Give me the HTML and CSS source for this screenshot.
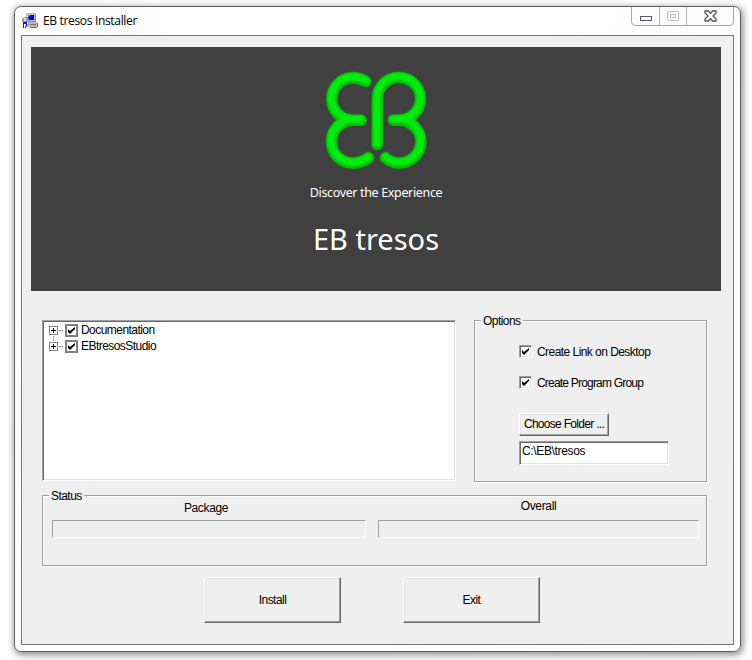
FILE: index.html
```html
<!DOCTYPE html>
<html lang="en">
<head>
<meta charset="utf-8">
<title>EB tresos Installer</title>
<link rel="stylesheet" href="styles.css">
</head>
<body>
<main class="window">
  <header class="titlebar">
    <svg class="app-icon" width="16" height="16" viewBox="0 0 16 16">
      <path fill="#bdbdbd" d="M4 0h10v9H4z"/><path fill="#8c8c8c" d="M13 1h1v8H5V8h8z"/>
      <path fill="#0808e8" d="M6 2h6v5H6z"/><path fill="#6d8cff" d="M6 2h2v1H7v1H6z"/>
      <path fill="#b8b8b8" d="M6 9h9l1 2v3H6z"/><path fill="#777" d="M8 11h6v1H8zM8 14h7v1H8zM15 10h1v4h-1z"/>
      <path fill="#999" d="M1 5l2-1h2l2 2v3H0V6z"/><path fill="#ddd" d="M2 5h2v3H2z"/>
      <path fill="#1515f0" d="M1 9h4v3l-1 3H1z"/><path fill="#fff" d="M2 11h2l-1 4H2z"/><path fill="#aaa" d="M5 11h2v3H5z"/>
    </svg>
    <h1 class="title">EB tresos Installer</h1>
    <div class="caption">
      <span class="cap min"><svg width="12" height="5"><rect x=".5" y=".5" width="11" height="4" rx=".5" fill="#fff" stroke="#535672" stroke-width="1.200"/></svg></span>
      <span class="cap max"><svg width="12" height="10"><rect x=".5" y=".5" width="11" height="9" rx="1" fill="#fff" stroke="#c0c0c0"/><rect x="3.500" y="3.500" width="5" height="3" fill="#fff" stroke="#c0c0c0"/></svg></span>
      <span class="cap close"><svg width="13" height="12" viewBox="0 0 13 12"><path d="M1 1h3.500l2 2.500L8.500 1H12v2L9 6l3 3v2H8.500l-2-2.500-2 2.500H1V9l3-3-3-3z" fill="#fff" stroke="#535666" stroke-width="1.300"/></svg></span>
    </div>
  </header>
  <section class="client">
    <div class="banner">
      <svg class="logo" width="104" height="100" viewBox="104 47 312 300" fill="none" stroke-linecap="round">
        <defs>
          <filter id="soft" x="-10%" y="-10%" width="120%" height="120%"><feGaussianBlur stdDeviation="3.500"/></filter>
          <g id="mark">
            <path d="M227 79C211 70 201 68 188 68a63.500 63.500 0 0 0 0 127h25M188 195a64.500 64.500 0 0 0 0 129c16 0 30-4 47-16"/>
            <path d="M261 268V132a65 64 0 1 1 65 63H309M326 195a66 64.500 0 0 1 0 129c-15 0-26-4-40-16"/>
          </g>
        </defs>
        <use href="#mark" stroke="#00b808" stroke-width="34"/>
        <use href="#mark" stroke="#00ee08" stroke-width="23" filter="url(#soft)" transform="translate(-1 -4)"/>
      </svg>
      <p class="tagline">Discover the Experience</p>
      <p class="product">EB tresos</p>
    </div>
    <div class="panels">
      <ul class="tree">
        <li><i class="expand"></i><i class="stub"></i><span class="tick"><svg width="7" height="7"><path d="M0 2v3l2 2 5-5V0L2 4z"/></svg></span><span class="label">Documentation</span></li>
        <li><i class="expand linked"></i><i class="stub"></i><span class="tick"><svg width="7" height="7"><path d="M0 2v3l2 2 5-5V0L2 4z"/></svg></span><span class="label">EBtresosStudio</span></li>
      </ul>
      <div class="group options">
        <span class="legend">Options</span>
        <label class="check"><span class="box"><svg width="7" height="7"><path d="M0 2v3l2 2 5-5V0L2 4z"/></svg></span>Create Link on Desktop</label>
        <label class="check tight"><span class="box"><svg width="7" height="7"><path d="M0 2v3l2 2 5-5V0L2 4z"/></svg></span>Create Program Group</label>
        <button class="btn choose">Choose Folder ...</button>
        <div class="field">C:\EB\tresos</div>
      </div>
    </div>
    <div class="group status">
      <span class="legend">Status</span>
      <div class="meter package"><span class="name">Package</span><div class="track"></div></div>
      <div class="meter overall"><span class="name">Overall</span><div class="track"></div></div>
    </div>
    <div class="actions">
      <button class="btn">Install</button>
      <button class="btn">Exit</button>
    </div>
  </section>
</main>
</body>
</html>
```
FILE: styles.css
```css
* { box-sizing: border-box; }
body { margin: 0; padding: 6px 0 0 14px; height: 660px; overflow: hidden; background: #fff; font: 12px/16px "Liberation Sans", sans-serif; letter-spacing: -.55px; color: #000; }
.window { width: 727px; height: 646px; padding: 0 6px; border: 1px solid #606060; border-radius: 7px; background: linear-gradient(105deg, #fff 0 8%, #fafafa 13%, #fff 18% 60%, #fbfbfb 80%, #fff); box-shadow: 1px 2px 7px 1px rgba(0,0,0,.45); }
.titlebar { display: flex; height: 28px; padding-left: 1px; }
.app-icon { margin-top: 6px; }
.title { margin: 5px auto 0 5px; font: 12px/18px "Open Sans", sans-serif; letter-spacing: -.33px; }
.caption { display: flex; width: 103px; height: 19px; border: 1px solid #a5a5a5; border-top: 0; border-radius: 0 0 5px 5px; }
.cap { display: flex; align-items: center; justify-content: center; }
.min { width: 28px; border-right: 1px solid #b5b5b5; padding: 5px 0 0 1px; }
.max { width: 27px; border-right: 1px solid #b5b5b5; }
.close { flex: 1; }
.client { width: 713px; height: 610px; padding: 11px 9px 0; border: 1px solid #777; background: #efefef; }
.banner { display: flex; flex-direction: column; align-items: center; width: 690px; height: 244px; padding-top: 24px; background: #404040; color: #fff; }
.logo { margin-left: 2px; }
.tagline { margin: 13px 0 0; font: 12.5px/18px "Noto Sans", sans-serif; letter-spacing: -.35px; }
.product { margin: 19px 0 0; font: 29px/36px "Noto Sans", sans-serif; letter-spacing: 0; }
.panels { display: flex; gap: 18px; margin: 29px 0 0 11px; }
.tree { width: 414px; height: 161px; margin: 0; padding: 1px 0 0 5px; list-style: none; background: #fff; border: 1px solid; border-color: #a0a0a0 #fff #fff #a0a0a0; box-shadow: inset 1px 1px #696969, inset -1px -1px #e3e3e3; }
.tree li { display: flex; align-items: center; height: 16px; }
.expand { position: relative; width: 9px; height: 9px; margin-left: 1px; border: 1px solid #848484; background: linear-gradient(#000, #000) center/5px 1px no-repeat, linear-gradient(#000, #000) center/1px 5px no-repeat; }
.linked::before { content: ""; position: absolute; left: 3px; top: -7px; height: 5px; border-left: 1px dotted #848484; }
.stub { width: 4px; margin: 0 2px 0 1px; border-top: 1px dotted #848484; }
.tick { display: flex; align-items: center; justify-content: center; width: 13px; height: 13px; border: 2px solid #808080; }
.label { margin-left: 3px; }
.group { position: relative; border: 1px solid #a0a0a0; box-shadow: 1px 1px #fff, inset 1px 1px #fff; }
.legend { position: absolute; left: 6px; top: -8px; padding: 0 2px; background: #efefef; }
.options { width: 233px; height: 162px; padding: 23px 0 0 44px; }
.check { display: flex; align-items: center; gap: 5px; height: 16px; margin-bottom: 15px; }
.tight { letter-spacing: -.8px; }
.box { display: flex; align-items: center; justify-content: center; width: 13px; height: 13px; margin-bottom: 1px; background: #fff; border: 1px solid; border-color: #a0a0a0 #fff #fff #a0a0a0; box-shadow: inset 1px 1px #696969, inset -1px -1px #e3e3e3; }
.btn { display: block; width: 137px; height: 46px; padding: 0; font: inherit; letter-spacing: inherit; color: #000; background: #efefef; border: 1px solid; border-color: #fff #696969 #696969 #fff; box-shadow: inset -1px -1px #a0a0a0, inset 1px 1px #e3e3e3; }
.choose { width: 90px; height: 23px; margin-top: 22px; padding-bottom: 2px; letter-spacing: -.7px; }
.field { width: 150px; height: 24px; margin-top: 5px; padding: 1px 2px; letter-spacing: -.35px; background: #fff; border: 1px solid; border-color: #a0a0a0 #fff #fff #a0a0a0; box-shadow: inset 1px 1px #696969, inset -1px -1px #e3e3e3; }
.status { display: flex; gap: 12px; width: 665px; height: 71px; margin: 13px 0 0 11px; padding-left: 9px; }
.meter { display: flex; flex-direction: column; align-items: center; padding-top: 4px; letter-spacing: -.35px; }
.package { width: 314px; }
.overall { width: 321px; padding-top: 2px; }
.package .name { margin-right: 6px; }
.track { width: 100%; height: 18px; margin-top: 4px; border: 1px solid; border-color: #a0a0a0 #fff #fff #a0a0a0; }
.overall .track { margin-top: 6px; }
.actions { display: flex; gap: 62px; margin: 11px 0 0 173px; }
```
